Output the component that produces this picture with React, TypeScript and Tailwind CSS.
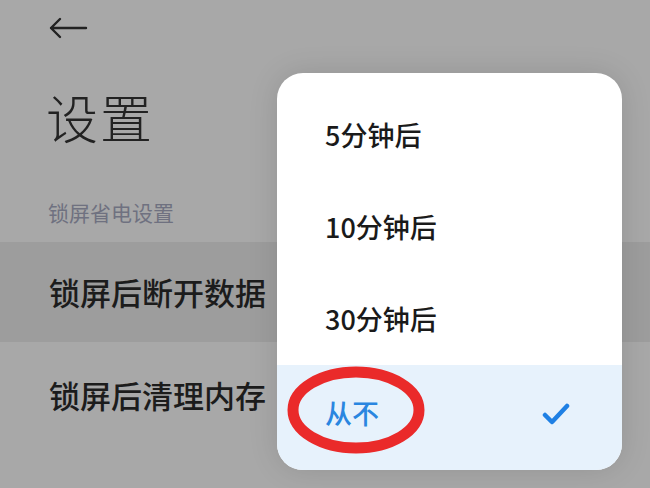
const font = { fontFamily: '"Noto Sans CJK SC", "Noto Sans", sans-serif' };

const options = ["5分钟后", "10分钟后", "30分钟后"];

export default function App() {
  return (
    <div
      className="relative w-[650px] h-[488px] overflow-hidden bg-[#a8a8a8] text-[#1c1c1c]"
      style={font}
    >
      {/* header */}
      <div className="pl-[49px] pt-[17px]">
        <svg width="40" height="22" viewBox="0 0 40 22" fill="none">
          <path
            d="M2 11 H37 M11 2 L2 11 L11 20"
            stroke="#222"
            strokeWidth="2.4"
            strokeLinecap="round"
            strokeLinejoin="round"
          />
        </svg>
      </div>
      <h1 className="pl-[46px] mt-[52px] text-[52px] leading-none font-light tracking-[2px] text-[#222]">
        设置
      </h1>
      <div className="pl-[48px] mt-[59px] text-[21px] leading-none text-[#6f7180]">
        锁屏省电设置
      </div>

      <div className="mt-[19px] h-[100px] bg-[#9d9d9d] flex items-center pl-[49px] text-[31px] font-medium">
        锁屏后断开数据
      </div>
      <div className="h-[106px] flex items-center pl-[49px] text-[31px] font-medium">
        锁屏后清理内存
      </div>

      {/* dropdown */}
      <div className="absolute left-[277px] top-[73px] w-[345px] h-[397px] rounded-[26px] bg-white overflow-hidden flex flex-col pt-[16px] shadow-[0_0_30px_rgba(0,0,0,0.12)]">
        {options.map((o) => (
          <div
            key={o}
            className="h-[92px] shrink-0 flex items-center pl-[48px] text-[27px] font-medium text-[#1a1a1a]"
          >
            {o}
          </div>
        ))}
        <div className="flex-1 bg-[#e7f2fc] flex items-center justify-between pl-[48px] pr-[52px] pb-[8px] text-[27px] font-medium text-[#2a86e0]">
          <span>从不</span>
          <svg width="28" height="24" viewBox="0 0 28 24" fill="none">
            <path
              d="M3 13 L10 20 L25 4"
              stroke="#1f80e4"
              strokeWidth="4.5"
              strokeLinecap="round"
              strokeLinejoin="round"
            />
          </svg>
        </div>
      </div>

      {/* red annotation */}
      <svg
        className="absolute left-[286px] top-[365px]"
        width="140"
        height="90"
        viewBox="0 0 140 90"
        fill="none"
      >
        <ellipse cx="70" cy="45" rx="63" ry="38" stroke="#ea2a2a" strokeWidth="11" />
      </svg>
    </div>
  );
}
